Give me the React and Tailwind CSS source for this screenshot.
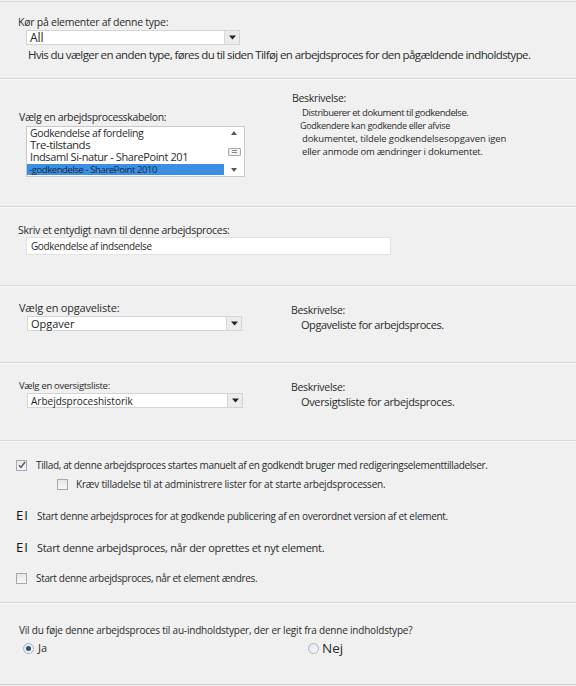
import React from "react";

function Arrow() {
  return (
    <span className="flex h-full w-[15px] items-center justify-center border-l border-[#d6d6d6] bg-[#ececec]">
      <svg className="h-[5px] w-[7px]" viewBox="0 0 7 4">
        <path d="M0 0h7L3.5 4z" fill="#222" />
      </svg>
    </span>
  );
}

function Select({ value, width, textClass }) {
  return (
    <div
      className={
        "flex h-[15px] items-center justify-between border border-[#d4d4d4] bg-white " + width
      }
    >
      <span className={"pl-[3px] leading-none text-[#222] " + textClass}>{value}</span>
      <Arrow />
    </div>
  );
}

function Checkbox({ checked }) {
  return (
    <span className="flex h-[11px] w-[11px] shrink-0 items-center justify-center border border-[#a8a8a8] bg-gradient-to-b from-[#e6e6e6] to-[#f8f8f8]">
      {checked && (
        <svg className="h-[8px] w-[8px]" viewBox="0 0 8 8">
          <path d="M1 4.2l2 2.2L7 1" fill="none" stroke="#4a5a78" strokeWidth="1.4" />
        </svg>
      )}
    </span>
  );
}

function Radio({ checked }) {
  return (
    <span className="flex h-[11px] w-[11px] items-center justify-center rounded-full border border-[#a9b3bf] bg-gradient-to-br from-[#dfe6ee] to-[#f7f9fb]">
      {checked && <span className="h-[5px] w-[5px] rounded-full bg-[#2c4f73]" />}
    </span>
  );
}

function Section({ children, className }) {
  return (
    <div className={"border-b border-[#d9d9d9] shadow-[0_1px_0_#fafafa] " + className}>
      {children}
    </div>
  );
}

export default function App() {
  return (
    <div
      className="h-[686px] w-[576px] overflow-hidden bg-[#f0f0f0] text-[11px] text-[#2b2b2b]"
      style={{ fontFamily: '"Open Sans", "Noto Sans", sans-serif' }}
    >
      <div className="h-[2px] border-b border-[#d9d9d9]" />

      <Section className="h-[77px] pl-[18px] pt-[14px]">
        <div className="text-[10.5px] leading-[13px] tracking-[-0.25px]">Kør på elementer af denne type:</div>
        <div className="mt-[1px] pl-[8px]">
          <Select value="All" width="w-[214px]" textClass="text-[12px]" />
        </div>
        <div className="mt-[2px] pl-[10px] text-[11.5px] leading-[15px] tracking-[-0.6px]">
          Hvis du vælger en anden type, føres du til siden Tilføj en arbejdsproces for den pågældende indholdstype.
        </div>
      </Section>

      <Section className="flex h-[128px] pl-[19px]">
        <div className="w-[273px] pt-[32px]">
          <div className="text-[10.5px] leading-[13px] tracking-[-0.35px]">Vælg en arbejdsprocesskabelon:</div>
          <div className="ml-[7px] mt-[2px] flex h-[51px] w-[219px] border border-[#c9c9c9] bg-white">
            <div className="flex-1 overflow-hidden leading-[12px]">
              <div className="pl-[3px] text-[10.5px] tracking-[-0.4px]">Godkendelse af fordeling</div>
              <div className="pl-[3px] text-[11.5px] tracking-[-0.5px]">Tre-tilstands</div>
              <div className="pl-[3px] text-[11px] tracking-[-0.4px]">Indsaml Si-natur - SharePoint 201</div>
              <div className="mt-[1px] h-[11px] bg-[#3a8fe2] pl-[2px] text-[9.5px] leading-[11px] tracking-[-0.4px] text-[#1a2a44]">
                -godkendelse - SharePoint 2010
              </div>
            </div>
            <div className="flex w-[20px] flex-col items-center justify-between py-[4px]">
              <svg className="h-[4px] w-[6px]" viewBox="0 0 6 4">
                <path d="M0 4L3 0l3 4z" fill="#555" />
              </svg>
              <span className="flex h-[8px] w-[13px] flex-col justify-center gap-[1px] rounded-[1px] border border-[#aaa] bg-[#f3f3f3] px-[3px]">
                <span className="h-px bg-[#888]" />
                <span className="h-px bg-[#888]" />
              </span>
              <svg className="h-[4px] w-[6px]" viewBox="0 0 6 4">
                <path d="M0 0h6L3 4z" fill="#555" />
              </svg>
            </div>
          </div>
        </div>
        <div className="pt-[13px] leading-[13px]">
          <div className="text-[10.5px] tracking-[-0.3px]">Beskrivelse:</div>
          <div className="mt-[1px] pl-[10px] text-[9.5px] tracking-[-0.45px]">Distribuerer et dokument til godkendelse.</div>
          <div className="pl-[8px] text-[9px] tracking-[-0.3px]">Godkendere kan godkende eller afvise</div>
          <div className="pl-[10px] text-[9.5px] tracking-[-0.1px]">dokumentet, tildele godkendelsesopgaven igen</div>
          <div className="pl-[10px] text-[9.5px] tracking-[-0.2px]">eller anmode om ændringer i dokumentet.</div>
        </div>
      </Section>

      <Section className="h-[79px] pl-[18px] pt-[17px]">
        <div className="text-[10.5px] leading-[13px] tracking-[-0.3px]">Skriv et entydigt navn til denne arbejdsproces:</div>
        <div className="ml-[8px] mt-[0px] flex h-[18px] w-[365px] items-center border border-[#e2e2e2] bg-white pl-[4px] text-[10px] tracking-[-0.4px]">
          Godkendelse af indsendelse
        </div>
      </Section>

      <Section className="flex h-[77px] pl-[19px]">
        <div className="w-[272px] pt-[15px]">
          <div className="text-[11px] leading-[14px] tracking-[-0.2px]">Vælg en opgaveliste:</div>
          <div className="mt-[1px] pl-[8px]">
            <Select value="Opgaver" width="w-[215px]" textClass="text-[11px]" />
          </div>
        </div>
        <div className="pt-[18px] leading-[13px]">
          <div className="text-[10.5px] tracking-[-0.3px]">Beskrivelse:</div>
          <div className="mt-[1px] pl-[10px] text-[11px] tracking-[-0.45px]">Opgaveliste for arbejdsproces.</div>
        </div>
      </Section>

      <Section className="flex h-[78px] pl-[19px]">
        <div className="w-[272px] pt-[16px]">
          <div className="text-[9.5px] leading-[13px] tracking-[-0.3px]">Vælg en oversigtsliste:</div>
          <div className="mt-[1px] pl-[8px]">
            <Select value="Arbejdsproceshistorik" width="w-[216px]" textClass="text-[10px]" />
          </div>
        </div>
        <div className="pt-[18px] leading-[13px]">
          <div className="text-[10.5px] tracking-[-0.3px]">Beskrivelse:</div>
          <div className="mt-[1px] pl-[10px] text-[11px] tracking-[-0.35px]">Oversigtsliste for arbejdsproces.</div>
        </div>
      </Section>

      <Section className="h-[162px] pl-[16px] pt-[17px]">
        <div className="flex h-[14px] items-center gap-[9px]">
          <Checkbox checked />
          <span className="text-[10px] tracking-[-0.35px]">
            Tillad, at denne arbejdsproces startes manuelt af en godkendt bruger med redigeringselementtilladelser.
          </span>
        </div>
        <div className="mt-[5px] flex h-[14px] items-center gap-[8px] pl-[41px]">
          <Checkbox />
          <span className="text-[10px] tracking-[-0.2px]">
            Kræv tilladelse til at administrere lister for at starte arbejdsprocessen.
          </span>
        </div>
        <div className="mt-[18px] flex h-[14px] items-center gap-[6px]">
          <span className="w-[15px] text-[13px] tracking-[1px] text-[#111]">EI</span>
          <span className="text-[10px] tracking-[-0.3px]">
            Start denne arbejdsproces for at godkende publicering af en overordnet version af et element.
          </span>
        </div>
        <div className="mt-[18px] flex h-[14px] items-center gap-[6px]">
          <span className="w-[15px] text-[13px] tracking-[1px] text-[#111]">EI</span>
          <span className="text-[11px] tracking-[-0.3px]">
            Start denne arbejdsproces, når der oprettes et nyt element.
          </span>
        </div>
        <div className="mt-[16px] flex h-[14px] items-center gap-[9px]">
          <Checkbox />
          <span className="text-[10px] tracking-[-0.33px]">Start denne arbejdsproces, når et element ændres.</span>
        </div>
      </Section>

      <div className="h-[82px] border-b border-[#cfcfcf] pl-[19px] pt-[21px]">
        <div className="text-[10px] leading-[13px] tracking-[-0.2px]">
          Vil du føje denne arbejdsproces til au-indholdstyper, der er legit fra denne indholdstype?
        </div>
        <div className="mt-[3px] flex items-center">
          <div className="flex w-[270px] items-center gap-[4px] pl-[4px]">
            <Radio checked />
            <span className="text-[11px]">Ja</span>
          </div>
          <div className="flex items-center gap-[3px] pl-[19px]">
            <Radio />
            <span className="text-[13.5px] leading-[16px]">Nej</span>
          </div>
        </div>
      </div>
    </div>
  );
}
